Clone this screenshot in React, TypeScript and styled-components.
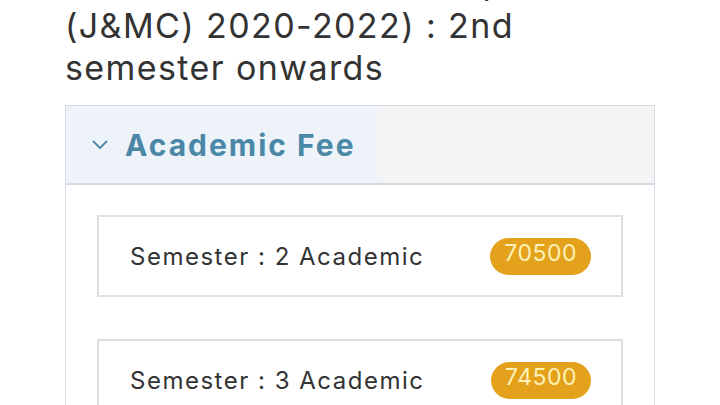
import React from 'react';
import styled, { createGlobalStyle } from 'styled-components';

const GlobalStyle = createGlobalStyle`
  html, body {
    margin: 0;
    padding: 0;
    background: #ffffff;
    overflow: hidden;
  }
  body {
    font-family: Inter, "Open Sans", sans-serif;
  }
`;

const Page = styled.div`
  width: 720px;
  height: 405px;
  overflow: hidden;
  padding: 0 65px;
  box-sizing: border-box;
`;

const Title = styled.h2`
  margin: -37px 0 16px;
  font-size: 34px;
  line-height: 42px;
  font-weight: 400;
  color: #333333;
  letter-spacing: 1.4px;
  white-space: nowrap;
`;

const Card = styled.section`
  width: 590px;
  border: 1px solid #d3dce4;
  box-sizing: border-box;
`;

const Header = styled.div`
  height: 77px;
  background: #f4f4f4;
  border-bottom: 2px solid #d3dce4;
  display: flex;
`;

const Toggle = styled.button`
  display: inline-flex;
  align-items: center;
  gap: 17px;
  padding: 0 22px 0 26px;
  border: none;
  background: #edf3f9;
  color: #4b88a8;
  font-family: inherit;
  font-size: 30px;
  font-weight: 700;
  letter-spacing: 2px;
  cursor: pointer;
`;

const Body = styled.div`
  padding: 30px 31px;
  display: flex;
  flex-direction: column;
  gap: 42px;
`;

const Row = styled.div`
  height: 82px;
  border: 2px solid #dde1e6;
  box-sizing: border-box;
  display: flex;
  align-items: center;
  justify-content: space-between;
  padding: 0 30px 0 31px;
`;

const Label = styled.span`
  font-size: 24px;
  color: #333333;
  letter-spacing: 1.5px;
`;

const Badge = styled.span<{ $tone: string }>`
  display: inline-flex;
  justify-content: center;
  height: 37px;
  line-height: 31px;
  padding: 0 14px;
  box-sizing: border-box;
  border-radius: 19px;
  background: ${({ $tone }) => $tone};
  color: #fdf1b6;
  font-size: 23px;
  letter-spacing: 0.5px;
`;

const Chevron = () => (
  <svg width="16" height="10" viewBox="0 0 16 10" fill="none">
    <path d="M1.5 1.5 L8 8 L14.5 1.5" stroke="#4b88a8" strokeWidth="1.8" strokeLinecap="round" />
  </svg>
);

const fees = [
  { semester: 2, amount: 70500 },
  { semester: 3, amount: 74500 },
];

export default function App() {
  return (
    <Page>
      <GlobalStyle />
      <Title>
        Bachelor of Journalism (Hons
        <br />
        (J&amp;MC) 2020-2022) : 2nd
        <br />
        semester onwards
      </Title>
      <Card>
        <Header>
          <Toggle>
            <Chevron />
            Academic Fee
          </Toggle>
        </Header>
        <Body>
          {fees.map((f) => (
            <Row key={f.semester}>
              <Label>Semester : {f.semester} Academic</Label>
              <Badge $tone="#e3a11c">{f.amount}</Badge>
            </Row>
          ))}
        </Body>
      </Card>
    </Page>
  );
}
